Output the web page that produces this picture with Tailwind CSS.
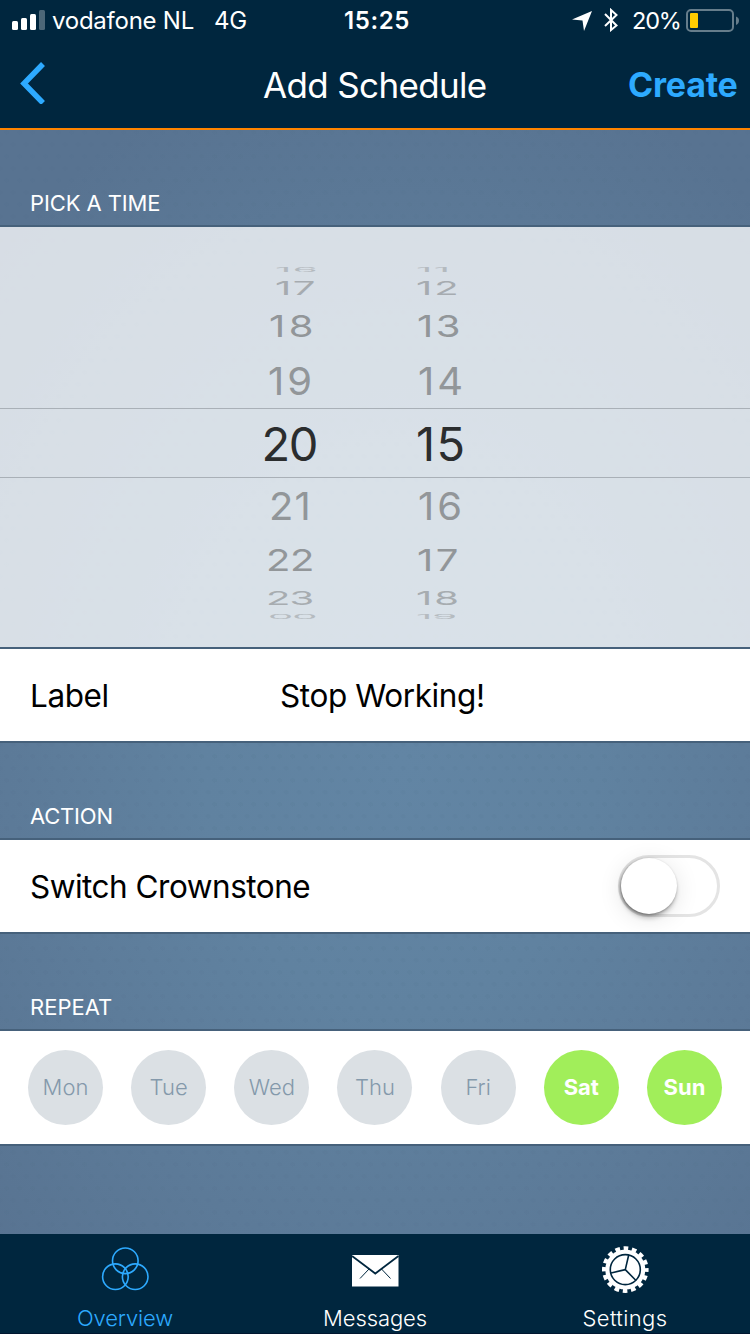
<!DOCTYPE html>
<html lang="en">
<head>
<meta charset="utf-8">
<title>Add Schedule</title>
<script src="https://cdn.jsdelivr.net/npm/@tailwindcss/browser@4"></script>
</head>
<body class="w-[750px] h-[1334px] overflow-hidden font-[Inter,'Liberation_Sans',sans-serif] whitespace-nowrap">
<div class="flex flex-col w-[750px] h-[1334px] bg-[#5a7695] bg-[radial-gradient(circle_2.5px,#4b688414_100%,transparent),radial-gradient(circle_2.5px,#4b688414_100%,transparent),radial-gradient(ellipse_560px_720px_at_400px_760px,#6285a4,#6082a0_35%,#5c7a98_70%,#587391)] bg-[size:13px_24px,13px_24px,100%_100%] bg-[position:0_0,6.5px_12px,0_0]">

  <!-- Status bar and navigation -->
  <header class="flex flex-col h-[130px] shrink-0 bg-[#00263e] border-b-2 border-[#ff8400] text-white">
    <div class="flex h-10 items-center pl-3 text-[24px] leading-10">
      <svg class="w-[33px] h-5 shrink-0" viewBox="0 0 33 20" fill="#fff"><rect y="11" width="6" height="9" rx="1.5"/><rect x="9" y="8" width="6" height="12" rx="1.5"/><rect x="18" y="4" width="6" height="16" rx="1.5"/><rect x="27" width="6" height="20" rx="1.5" opacity=".3"/></svg>
      <span class="ml-[7px] pt-0.5 w-[162px] tracking-[-0.25px]">vodafone NL</span>
      <span class="w-[130px] pt-0.5 tracking-[-0.3px]">4G</span>
      <span class="w-[228px] pt-0.5 font-semibold tracking-[0.6px]">15:25</span>
      <svg class="mt-0.5 w-5 h-5 shrink-0" viewBox="0 0 20 20"><path d="M20 0 12 20 10.5 9.500 0 8.500Z" fill="#fff"/></svg>
      <svg class="ml-3 w-[14px] h-6 shrink-0" viewBox="0 0 14 24" fill="none" stroke="#fff" stroke-width="2"><path d="M1 6 12.500 17.500 7 22V2L12.500 7 1 18"/></svg>
      <span class="ml-[14px] pt-0.5 w-[54px] text-[23.5px] tracking-[-1.2px]">20%</span>
      <svg class="mt-0.5 w-[54px] h-6 shrink-0" viewBox="0 0 54 24"><rect x="1" y="1" width="46" height="21" rx="4" fill="none" stroke="#667d8b" stroke-width="2"/><rect x="4" y="4" width="8" height="15" rx="1" fill="#ffcc00"/><path d="M50 7.500Q53 8.500 53 11.500T50 16Z" fill="#667d8b"/></svg>
    </div>
    <div class="flex h-[88px] items-center">
      <svg class="ml-5 mb-0.5 w-[26px] h-[42px] shrink-0" viewBox="0 0 26 42" fill="none" stroke="#2daaff" stroke-width="5.500"><path d="M23 2 4 21.500 23 41"/></svg>
      <h1 class="ml-[217px] w-[365px] text-[35px] pt-px leading-[44px] tracking-[-0.65px]">Add Schedule</h1>
      <span class="text-[34px] pt-0.5 leading-[44px] font-bold tracking-[-0.2px] text-[#2daaff]">Create</span>
    </div>
  </header>

  <!-- Time picker -->
  <h2 class="h-[95px] shrink-0 pt-[59px] pl-[30px] text-[22px] leading-7 tracking-[-0.1px] text-white">PICK A TIME</h2>
  <section class="flex flex-col h-[424px] shrink-0 bg-white/76 border-y-2 border-[#46617b] bg-clip-padding pt-[31px] text-[40px] text-[#929699]">
    <div class="flex h-5 items-center opacity-50"><span class="mt-1 ml-[275px] w-[141px] tracking-[1.5px] scale-y-[0.15]">16</span><span class="mt-1 tracking-[1.5px] scale-y-[0.15]">11</span></div>
    <div class="flex h-5 items-center opacity-70"><span class="ml-[275px] w-[141px] tracking-[1.5px] scale-y-[0.48]">17</span><span class="tracking-[2px] scale-y-[0.48]">12</span></div>
    <div class="flex h-14 items-center"><span class="ml-[269px] w-[148px] tracking-[3.5px] scale-y-[0.76]">18</span><span class="tracking-[2.5px] scale-y-[0.76]">13</span></div>
    <div class="flex h-[54px] items-center"><span class="ml-[268px] w-[150px] tracking-[3px] scale-y-[0.97]">19</span><span class="tracking-[3px] scale-y-[0.97]">14</span></div>
    <div class="flex h-[70px] items-center border-y border-[#a9b0b7] text-[47px] text-[#2b2d2e]"><span class="pt-0.5 ml-[261.5px] w-[154.500px] tracking-[-1.5px]">20</span><span class="pt-0.5 tracking-[1.5px]">15</span></div>
    <div class="flex h-14 items-center"><span class="ml-[269px] w-[149px] tracking-[1px] scale-y-[0.97]">21</span><span class="tracking-[3px] scale-y-[0.97]">16</span></div>
    <div class="flex h-[52px] items-center"><span class="ml-[266px] w-[151px] tracking-[-0.5px] scale-y-[0.76]">22</span><span class="tracking-[2.5px] scale-y-[0.76]">17</span></div>
    <div class="flex h-6 items-center opacity-70"><span class="ml-[266px] w-[150px] tracking-[-1px] scale-y-[0.48]">23</span><span class="tracking-[2px] scale-y-[0.48]">18</span></div>
    <div class="flex h-[14px] items-center opacity-50"><span class="ml-[268px] w-[148px] tracking-[-1px] scale-y-[0.15]">00</span><span class="scale-y-[0.15]">19</span></div>
  </section>
  <div class="flex h-[94px] shrink-0 items-center bg-white border-b-2 border-[#46617b] pt-0.5 pl-[30px] text-[31.5px] text-black tracking-[-0.4px]">
    <span class="w-[250px]">Label</span><span>Stop Working!</span>
  </div>

  <h2 class="h-[95px] shrink-0 pt-[59px] pl-[30px] text-[22px] leading-7 tracking-[-0.2px] text-white">ACTION</h2>
  <div class="flex h-24 shrink-0 items-center justify-between bg-white border-y-2 border-[#46617b] px-[30px] text-[31.5px] text-black tracking-[-0.5px]">
    <span class="pt-0.5">Switch Crownstone</span>
    <span class="w-[102px] h-[62px] rounded-full border-3 border-[#e4e4e4]"><span class="block size-14 rounded-full bg-white shadow-[0_5px_5px_-1px_#00000038,-1px_1px_3px_#00000066,0_4px_24px_#0000001c]"></span></span>
  </div>

  <h2 class="h-[95px] shrink-0 pt-[59px] pl-[30px] text-[22px] leading-7 text-white">REPEAT</h2>
  <div class="flex h-[117px] shrink-0 items-center justify-between bg-white border-y-2 border-[#46617b] px-7 text-[22px] font-light text-[#8499ab] *:flex *:size-[75px] *:items-center *:justify-center *:rounded-full *:bg-[#dbe0e4]">
    <span>Mon</span><span>Tue</span><span>Wed</span><span>Thu</span><span>Fri</span>
    <b class="bg-[#a1ee5a]! text-white font-bold">Sat</b><b class="bg-[#a1ee5a]! text-white font-bold">Sun</b>
  </div>

  <!-- Tab bar -->
  <nav class="mt-auto grid grid-cols-3 h-[100px] shrink-0 bg-[#00263e] border-b border-[#001630] text-[22px] leading-7 font-light text-white text-center *:flex *:flex-col *:items-center *:pt-3">
    <div class="text-[#2daaff]">
      <svg class="w-12 h-12" viewBox="0 0 48 48" fill="none" stroke="#2daaff" stroke-width="1.600"><circle cx="24.300" cy="14.800" r="12.800"/><circle cx="14.400" cy="30.700" r="12.800"/><circle cx="34.200" cy="30.700" r="12.800"/></svg>
      <span class="mt-2.5 tracking-[-0.15px]">Overview</span>
    </div>
    <div>
      <svg class="w-12 h-12" viewBox="0 0 48 48"><path d="M1 9H47.500V40.500H1Z" fill="#fff"/><path d="M1 10 24.300 27.500 47.500 10" fill="none" stroke="#00263e" stroke-width="1.800"/><path d="M18 23 9 32.500M30.500 23 39.500 32.500" stroke="#00263e" stroke-width="1"/></svg>
      <span class="mt-2.5 tracking-[-0.1px]">Messages</span>
    </div>
    <div>
      <svg class="w-12 h-12" viewBox="0 0 48 48" fill="none"><circle cx="24.300" cy="23.600" r="20" fill="#fff"/><circle cx="24.300" cy="23.600" r="21.300" stroke="#fff" stroke-width="4" stroke-dasharray="4.700 3.665" stroke-dashoffset="2.350"/><circle cx="24.300" cy="23.600" r="15" stroke="#00263e" stroke-width="1.600"/><path d="M24.300 23.600 27.700 9M24.300 23.600 10 27M24.300 23.600 35 34.500" stroke="#00263e" stroke-width="1.600"/></svg>
      <span class="mt-2.5 tracking-[0.35px]">Settings</span>
    </div>
  </nav>
</div>
</body>
</html>
